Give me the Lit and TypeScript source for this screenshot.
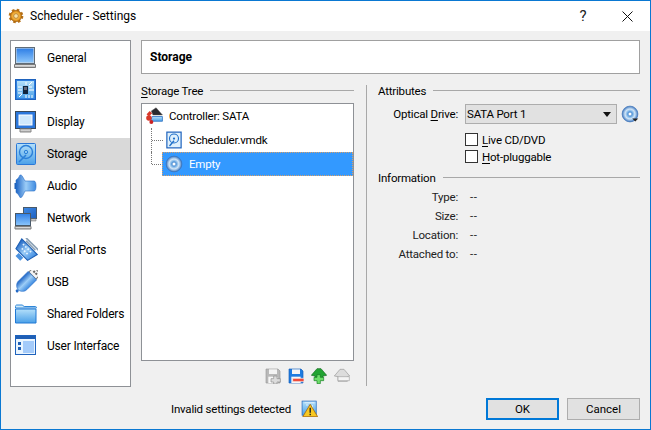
import { LitElement, html, css, svg } from "lit";
import { customElement } from "lit/decorators.js";

const icon = (body: unknown, size = 24, cls = "") =>
  html`<svg class=${cls} width=${size} height=${size} viewBox="0 0 24 24">${body}</svg>`;

const defs = html`<svg class="defs" width="0" height="0"><defs>
  <linearGradient id="b" x1="0" y1="0" x2="0" y2="1"><stop offset="0" stop-color="#2f7fe6"/><stop offset="1" stop-color="#8cc6fb"/></linearGradient>
  <linearGradient id="bd" x1="0" y1="0" x2="1" y2="1"><stop offset="0" stop-color="#3f8be6"/><stop offset="1" stop-color="#1d5fc0"/></linearGradient>
  <linearGradient id="h" x1="0" y1="0" x2="1" y2="0"><stop offset="0" stop-color="#1c63c4"/><stop offset=".5" stop-color="#9ccdf7"/><stop offset="1" stop-color="#3d8ae0"/></linearGradient>
  <linearGradient id="f" x1="0" y1="0" x2="0" y2="1"><stop offset="0" stop-color="#b5e0fa"/><stop offset="1" stop-color="#4aa0e8"/></linearGradient>
  <linearGradient id="g" x1="0" y1="0" x2="0" y2="1"><stop offset="0" stop-color="#f4f4f4"/><stop offset="1" stop-color="#a9a9a9"/></linearGradient>
  <radialGradient id="d"><stop offset="0" stop-color="#fff"/><stop offset=".28" stop-color="#5a9fe0"/><stop offset=".62" stop-color="#d2e6f7"/><stop offset="1" stop-color="#3f78c0"/></radialGradient>
  <radialGradient id="o"><stop offset="0" stop-color="#ffe9a0"/><stop offset=".7" stop-color="#eda52c"/><stop offset="1" stop-color="#b86d10"/></radialGradient>
</defs></svg>`;

const general = svg`
  <rect x="1.500" y="1.500" width="19" height="16" fill="#d8dde2" stroke="#5f6c78"/>
  <rect x="2.500" y="2.500" width="17" height="14" fill="url(#b)"/>
  <path d="M.5 18.500h21v3H.5z" fill="url(#g)" stroke="#7a7a7a"/>`;
const system = svg`
  <rect x="1.500" y="1.500" width="20" height="20" fill="#2f7fe0" stroke="#1f63bd"/>
  <rect x="3" y="3" width="17" height="17" fill="url(#f)"/>
  <rect x="9" y="8" width="5" height="8" fill="#10243c"/>
  <rect x="10" y="9" width="3" height="3" fill="#667"/>
  <path d="M4 9h4M4 12h4M4 15h4M15 9h3M15 12h5M12 4v3M15 7l3-3M12 17v3M15 17v3M18 17v3M5 19l3-3" stroke="#fff" fill="none"/>`;
const display = svg`
  <rect x="1.500" y="1.500" width="20" height="17" fill="#2b77dc" stroke="#3a4a5a"/>
  <rect x="5" y="5" width="13" height="10" fill="#cfe8fc" stroke="#fff"/>
  <path d="M6 19h11v3H6z" fill="url(#g)" stroke="#8a8a8a"/>`;
const storage = svg`
  <rect x="2.500" y="1.500" width="19" height="21" rx="1" fill="url(#f)" stroke="#2a78d8"/>
  <circle cx="12" cy="10" r="6.500" fill="none" stroke="#2b7fd8" stroke-width="1.400"/>
  <circle cx="12" cy="10" r="1.700" fill="none" stroke="#2b7fd8"/>
  <path d="M5 20l7-7" stroke="#2b7fd8" stroke-width="1.600"/>`;
const hdd = svg`
  <rect x="2.500" y="1.500" width="19" height="21" fill="#dff0fc" stroke="#1f63bd" stroke-width="1.600"/>
  <circle cx="12" cy="10" r="6" fill="none" stroke="#1f6fc9" stroke-width="1.500"/>
  <circle cx="12" cy="10" r="1.500" fill="#1f6fc9"/>
  <path d="M6 20l6-7" stroke="#1f6fc9" stroke-width="1.800"/>`;
const audio = svg`
  <path d="M.5 9h1.500v6H.5z" fill="#1c5fb8"/>
  <path d="M2 6c2-1 3-3 4-5 1.500 0 2 .5 2.500 1.500L11 7h9c1.400 0 2 2 2 5s-.6 5-2 5h-9l-2.500 5C8 23 7.500 23.500 6 23.500c-1-2-2-4-4-5z" fill="url(#h)" stroke="#2a6fc7" stroke-width=".6"/>`;
const network = svg`
  <rect x="9.500" y="1.500" width="13" height="11" fill="url(#bd)" stroke="#48596a"/>
  <rect x="1.500" y="7.500" width="15" height="12" fill="url(#b)" stroke="#48596a"/>
  <path d="M1 20.500h16v2.500H1z" fill="url(#g)" stroke="#7f7f7f"/>
  <path d="M17 13h5v2h-5z" fill="url(#g)" stroke="#7f7f7f" stroke-width=".6"/>`;
const serial = svg`
  <g transform="rotate(45 12 12) translate(-1 -.5) scale(1.100)">
    <path d="M2 7h20l-2.500 10h-15z" fill="url(#h)" stroke="#1d5fb5"/>
    <path d="M4 3.500h16M6 5.500h12" stroke="#8aa0b5" stroke-width="1.500"/>
    <path d="M6 9.500h12M8 13h8" stroke="#e6f4ff" stroke-width="1.500" stroke-dasharray="1.500 1.500"/>
    <path d="M9 18h6v4H9z" fill="#4a92e0"/>
  </g>`;
const usb = svg`
  <g transform="rotate(45 12 12)">
    <rect x="7" y="-4" width="10" height="7" fill="#f4f4f4" stroke="#777"/>
    <path d="M9.500 -2h2v2h-2zM12.500 -2h2v2h-2z" fill="#666"/>
    <path d="M6 3h12v14c0 3-3 6-6 6s-6-3-6-6z" fill="url(#h)" stroke="#2a6fc7" stroke-width=".6"/>
    <circle cx="12" cy="24.500" r="1.500" fill="#2369c5"/>
  </g>`;
const folder = svg`
  <path d="M1.500 6V4.500c0-.8.5-1.500 1.200-1.500h5.500l2 1.500h11.300c.5 0 1 .5 1 1V6z" fill="#cfeafb" stroke="#2f86d8"/>
  <path d="M1.500 7h20.500v14H1.500z" fill="url(#f)" stroke="#2078d4"/>`;
const ui = svg`
  <rect x="1.500" y="1.500" width="20" height="19" fill="#eaf5ff" stroke="#1f63bd"/>
  <path d="M2 2h19v3H2z" fill="#1f5fb5"/>
  <path d="M9 7h11v12H9z" fill="#a4cbfa"/>
  <path d="M4 8h3v3H4zM4 13h3v3H4z" fill="#1f5fb5"/>`;
const disc = svg`
  <circle cx="12" cy="12" r="10.500" fill="url(#d)" stroke="#3f74b8"/>
  <circle cx="12" cy="12" r="2.500" fill="#fff" stroke="#3f7fc9" stroke-width=".8"/>`;
const ctrl = svg`
  <path d="M8 5l6-4 8 9H10z" fill="#2a2a2e" stroke="#555" stroke-width=".6"/>
  <path d="M9 12h13v6H7z" fill="url(#f)" stroke="#2a6fc0"/>
  <circle cx="5" cy="14" r="3.500" fill="#d8382a"/>
  <path d="M2 9l4-4 3 3-4 4z" fill="#d8382a"/>
  <circle cx="8" cy="19" r="2.500" fill="#c22"/>`;
const floppy = (fill: string, stroke: string) => svg`
  <path d="M1.500 1.500h18l3 3v18h-21z" fill=${fill} stroke=${stroke}/>
  <path d="M6 2h12v7H6z" fill="#f4f4f4"/>
  <path d="M5 13h14v9.500H5z" fill="#f7f7f7"/>`;
const addAtt = svg`${floppy("#b9b9b9", "#9a9a9a")}
  <path d="M13 12h5v4h5v5h-5v3h-5v-3H9v-5h4z" fill="#dcdcdc" stroke="#8e8e8e"/>`;
const remAtt = svg`${floppy("#1e7be0", "#155db8")}
  <path d="M7 15.500h17v5H7z" fill="#ee4b3a" stroke="#f6f6f6"/>`;
const up = svg`
  <path d="M.5 11L9 1h6l8.500 10-5.500 1v3H6v-3z" fill="#22a332" stroke="#12681c"/>
  <path d="M9 10h5v4h5v5h-5v4.500H9V19H4.500v-5H9z" fill="#6dde6a" stroke="#127a20"/>`;
const down = svg`
  <path d="M.5 12L9 2h6l8.500 10L20 13v7H6v-7z" fill="#dcdcdc" stroke="#989898"/>
  <path d="M6 13h17v6H6z" fill="#f4f4f4" stroke="#a2a2a2"/>`;
const warn = svg`
  <rect x="1.500" y="1.500" width="20" height="20" fill="url(#f)" stroke="#1f63bd"/>
  <path d="M5 4h14M7 7h3M16 7v5" stroke="#fff"/>
  <path d="M13 6l10.500 17.500H2.500z" fill="#f8c820" stroke="#a86a10" stroke-width="1.200"/>
  <path d="M13 11v7M13 19.500v2" stroke="#222" stroke-width="2"/>`;
const gear = svg`
  <circle cx="12" cy="12" r="8.500" fill="none" stroke="#b8741a" stroke-width="5" stroke-dasharray="3.500 3.180"/>
  <circle cx="12" cy="12" r="8.500" fill="url(#o)" stroke="#a86412"/>
  <circle cx="12" cy="12" r="3.500" fill="#f7e3a8" stroke="#a86412"/>`;

const CATEGORIES: [string, unknown][] = [
  ["General", general], ["System", system], ["Display", display], ["Storage", storage],
  ["Audio", audio], ["Network", network], ["Serial Ports", serial], ["USB", usb],
  ["Shared Folders", folder], ["User Interface", ui],
];

@customElement("app-root")
export class AppRoot extends LitElement {
  static styles = css`
    :host {
      display: block; width: 651px; height: 430px; box-sizing: border-box;
      border: 1px solid #0a78d2; background: #f0f0f0; color: #000;
      font: 11.5px/16px Roboto, sans-serif; letter-spacing: -0.2px; overflow: hidden;
    }
    * { box-sizing: border-box; }
    span { white-space: nowrap; }
    u { text-decoration-thickness: 1px; text-underline-offset: 2px; }
    svg { display: block; flex: none; overflow: hidden; }
    .defs { position: absolute; }
    .title { height: 30px; background: #fff; display: flex; align-items: center; padding: 0 0 0 7px; font-size: 12px; letter-spacing: 0; }
    .title .name { margin-left: 6px; flex: 1; }
    .help { width: 46px; text-align: center; font-size: 15px; color: #222; padding-left: 4px; }
    .close { width: 46px; display: flex; justify-content: center; padding-left: 1px; }
    .body { display: flex; gap: 10px; padding: 9px 10px 0 9px; height: 356px; }
    .side { width: 121px; height: 347px; flex: none; background: #fff; border: 1px solid #8e9196; padding-top: 1px; font-size: 12px; }
    .cat { height: 32px; display: flex; align-items: center; gap: 9px; padding-left: 3px; }
    .cat.sel { background: #d9d9d9; }
    .main { flex: 1; display: flex; flex-direction: column; min-width: 0; }
    .head { height: 34px; flex: none; background: #fff; border: 1px solid #a0a0a0; display: flex; align-items: center; padding-left: 8px; font-weight: 700; font-size: 12px; letter-spacing: 0; }
    .panes { display: flex; flex: 1; min-height: 0; padding-top: 8px; }
    .left { width: 213px; flex: none; display: flex; flex-direction: column; }
    .legend { display: flex; align-items: center; gap: 7px; height: 18px; flex: none; }
    .legend::after { content: ""; flex: 1; border-top: 1px solid #a8a8a8; margin-bottom: 2px; }
    .tree { margin-top: 3px; height: 258px; flex: none; background: #fff; border: 1px solid #8e9196; }
    .node { height: 24px; display: flex; align-items: center; gap: 5px; padding-left: 3px; }
    .node.child { padding-left: 0; gap: 0; }
    .conn { width: 20px; margin-left: 9px; height: 24px; flex: none; border-left: 1px dotted #777; }
    .conn::after { content: ""; display: block; height: 12px; width: 11px; border-bottom: 1px dotted #777; }
    .conn.last { height: 12px; align-self: flex-start; }
    .rowitem { flex: 1; height: 24px; display: flex; align-items: center; gap: 6px; padding-left: 2px; margin-left: -9px; border: 1px solid transparent; }
    .rowitem.sel { background: #3399ff; color: #fff; border: 1px dotted #d9a068; }
    .tools { height: 24px; flex: none; display: flex; justify-content: flex-end; align-items: center; gap: 7px; padding-right: 4px; margin-top: 3px; }
    .sep { width: 1px; background: #a8a8a8; margin: 3px 11px 0 12px; height: 301px; flex: none; }
    .right { flex: 1; min-width: 0; }
    .drive-row { display: flex; align-items: center; height: 22px; margin-top: 3px; }
    .drive-row .lab { width: 80px; flex: none; margin-right: 7px; text-align: right; }
    .combo { width: 152px; height: 20px; background: #e1e1e1; border: 1px solid #adadad; display: flex; align-items: center; justify-content: space-between; padding: 0 5px 0 1px; flex: none; }
    .arrow { width: 0; height: 0; border: 4px solid transparent; border-top: 5px solid #111; border-bottom: 0; }
    .drive-row svg { margin-left: 4px; }
    .checks { padding: 8px 0 0 87px; display: flex; flex-direction: column; gap: 4px; }
    .check { display: flex; align-items: center; gap: 4px; height: 13px; }
    .box { width: 13px; height: 13px; background: #fff; border: 1px solid #333; flex: none; }
    .legend.info { margin-top: 6px; }
    .irow { display: flex; height: 19px; align-items: center; }
    .irow .lab { width: 80px; flex: none; margin-right: 12px; text-align: right; color: #222; }
    .irow .val { letter-spacing: 0.6px; color: #222; }
    .foot { display: flex; align-items: center; height: 42px; padding: 1px 10px 0 170px; }
    .msg { width: 130px; flex: none; }
    .foot .spacer { flex: 1; }
    button { font: inherit; color: #000; width: 73px; height: 22px; background: #e1e1e1; border: 1px solid #adadad; padding: 0; margin-left: 8px; }
    button.def { border: 2px solid #0078d7; margin-left: 0; }
  `;

  render() {
    return html`${defs}
      <div class="title">
        ${icon(gear, 16)}
        <span class="name">Scheduler - Settings</span>
        <span class="help">?</span>
        <span class="close"><svg width="11" height="11" viewBox="0 0 11 11"><path d="M.5.5l10 10M10.500.5l-10 10" stroke="#111" fill="none"/></svg></span>
      </div>
      <div class="body">
        <div class="side">
          ${CATEGORIES.map(([n, i]) => html`<div class="cat ${n === "Storage" ? "sel" : ""}">${icon(i)}<span>${n}</span></div>`)}
        </div>
        <div class="main">
          <div class="head">Storage</div>
          <div class="panes">
            <div class="left">
              <div class="legend"><span><u>S</u>torage Tree</span></div>
              <div class="tree">
                <div class="node">${icon(ctrl, 19)}<span>Controller: SATA</span></div>
                <div class="node child"><span class="conn"></span><div class="rowitem">${icon(hdd, 18)}<span>Scheduler.vmdk</span></div></div>
                <div class="node child"><span class="conn last"></span><div class="rowitem sel">${icon(disc, 18)}<span>Empty</span></div></div>
              </div>
              <div class="tools">
                ${icon(addAtt, 16)}${icon(remAtt, 16)}${icon(up, 16)}${icon(down, 16)}
              </div>
            </div>
            <div class="sep"></div>
            <div class="right">
              <div class="legend"><span>Attributes</span></div>
              <div class="drive-row">
                <span class="lab">Optical <u>D</u>rive:</span>
                <div class="combo"><span>SATA Port 1</span><span class="arrow"></span></div>
                ${icon(svg`${disc}<path d="M15 18h8l-4 4z" fill="#222"/>`, 18)}
              </div>
              <div class="checks">
                <div class="check"><span class="box"></span><span><u>L</u>ive CD/DVD</span></div>
                <div class="check"><span class="box"></span><span><u>H</u>ot-pluggable</span></div>
              </div>
              <div class="legend info"><span>Information</span></div>
              <div>
                ${["Type:", "Size:", "Location:", "Attached to:"].map(
                  (l) => html`<div class="irow"><span class="lab">${l}</span><span class="val">--</span></div>`
                )}
              </div>
            </div>
          </div>
        </div>
      </div>
      <div class="foot">
        <span class="msg">Invalid settings detected</span>
        ${icon(warn, 17)}
        <span class="spacer"></span>
        <button class="def">OK</button>
        <button>Cancel</button>
      </div>`;
  }
}
